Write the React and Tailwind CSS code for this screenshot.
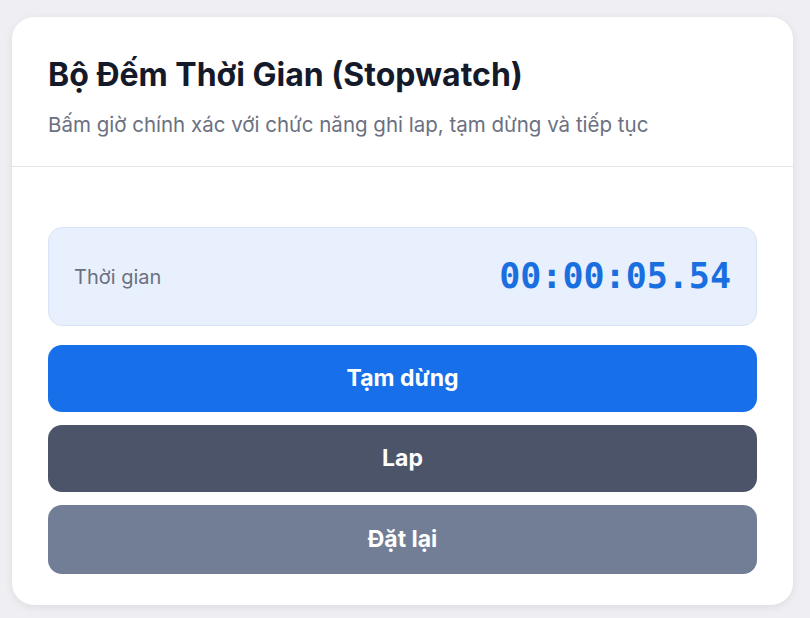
export default function App() {
  return (
    <div
      className="min-h-screen w-full bg-[#efeef2] pt-[17px] pl-[12px] pr-[17px]"
      style={{ fontFamily: "Inter, 'Noto Sans', sans-serif" }}
    >
      <div className="w-[781px] h-[588px] bg-white rounded-[22px] shadow-[0_2px_8px_rgba(0,0,0,0.08)] overflow-hidden">
        {/* en-tête */}
        <div className="h-[150px] border-b border-[#e3e3e8] px-[36px] pt-[36px]">
          <h1 className="text-[32px] leading-[44px] font-bold text-[#151a2b]">
            Bộ Đếm Thời Gian (Stopwatch)
          </h1>
          <p className="mt-[14px] text-[20.5px] leading-[28px] text-[#6b7080]">
            Bấm giờ chính xác với chức năng ghi lap, tạm dừng và tiếp tục
          </p>
        </div>

        <div className="px-[36px] pt-[60px] flex flex-col">
          <div className="h-[99px] rounded-[14px] bg-[#e8effd] border border-[#d9e3f7] flex items-center justify-between px-[25px]">
            <span className="text-[20px] text-[#6b7080]">Thời gian</span>
            <span
              className="text-[35px] font-bold text-[#1a6fe0]"
              style={{ fontFamily: "'DejaVu Sans Mono', monospace" }}
            >
              00:00:05.54
            </span>
          </div>

          <div className="mt-[19px] flex flex-col gap-[13px]">
            <button className="h-[67px] rounded-[14px] bg-[#176fe9] text-white text-[23px] font-bold">
              Tạm dừng
            </button>
            <button className="h-[67px] rounded-[14px] bg-[#4b5468] text-white text-[23px] font-bold">
              Lap
            </button>
            <button className="h-[69px] rounded-[14px] bg-[#717e96] text-white text-[23px] font-bold">
              Đặt lại
            </button>
          </div>
        </div>
      </div>
    </div>
  );
}
